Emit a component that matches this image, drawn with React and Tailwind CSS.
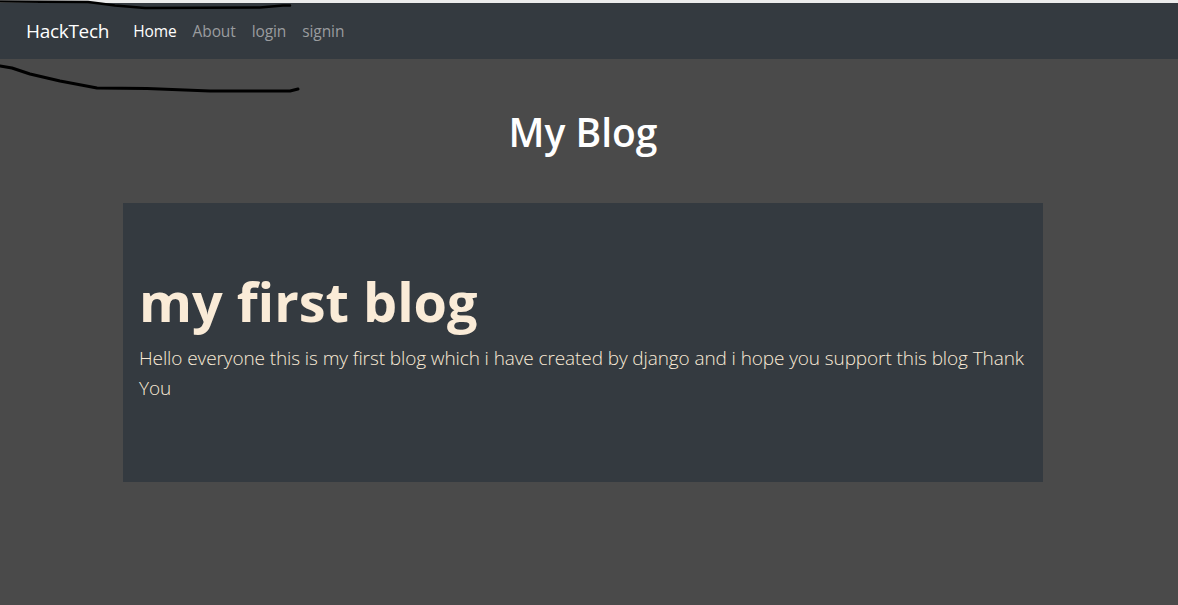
import React from 'react';

const NAV_LINKS = [
  { label: 'Home', active: true },
  { label: 'About' },
  { label: 'login' },
  { label: 'signin' },
];

export default function App() {
  return (
    <div
      className="relative min-h-[605px] bg-[#4a4a4a] overflow-hidden"
      style={{ fontFamily: '"Segoe UI", "Open Sans", "Noto Sans", sans-serif' }}
    >
      <div className="h-[3px] bg-[#ececec]" />
      <nav className="h-[56px] bg-[#343a40] flex items-center px-[26px]">
        <a className="text-[19px] tracking-[-0.3px] text-white mr-[24px] mt-[1px]">HackTech</a>
        <ul className="flex items-center gap-[16px] text-[15.5px] tracking-[-0.1px] mt-[2px]">
          {NAV_LINKS.map((link) => (
            <li key={link.label} className={link.active ? 'text-white' : 'text-[#9a9c9f]'}>
              {link.label}
            </li>
          ))}
        </ul>
      </nav>

      <h1 className="text-center text-[39px] font-semibold text-white leading-[1.2] mt-[50px] pr-[12px]">My Blog</h1>

      <div className="mt-[47px] ml-[123px] w-[920px] bg-[#343a40] px-[16px] pt-[65px] pb-[63px] text-[#faebd7]">
        <h2 className="text-[54px] font-bold leading-[67px] mb-[8px]">my first blog</h2>
        <p className="text-[19px] tracking-[-0.1px] font-light leading-[30px] mb-[16px]">
          Hello everyone this is my first blog which i have created by django and i hope you support this blog Thank You
        </p>
      </div>

      {/* pen scribbles over the screenshot */}
      <svg className="absolute left-0 top-0 pointer-events-none" width="320" height="100" viewBox="0 0 320 100">
        <path
          d="M0 1.5 L88 2 L100 3.5 L115 5.5 L145 8 L260 7.5 L283 5.5 L290 5.5"
          fill="none"
          stroke="#000"
          strokeWidth="2.5"
          strokeLinecap="round"
          strokeLinejoin="round"
        />
        <path
          d="M0 66 L12 68 L30 74 L60 81 L97 88 L147 88.5 L210 91 L290 91 L298 89"
          fill="none"
          stroke="#000"
          strokeWidth="3"
          strokeLinecap="round"
          strokeLinejoin="round"
        />
      </svg>
    </div>
  );
}
